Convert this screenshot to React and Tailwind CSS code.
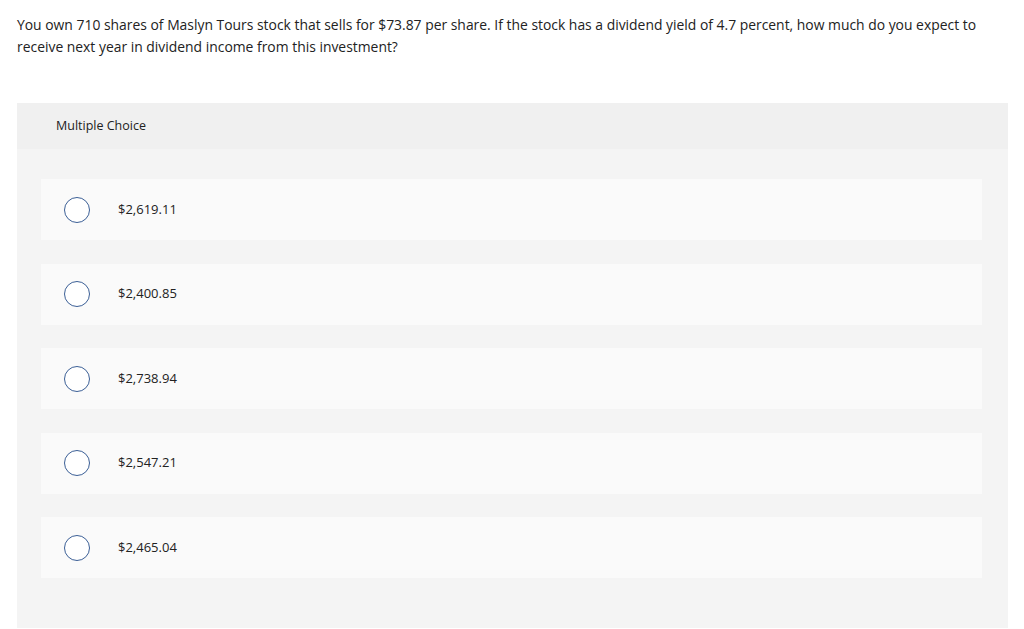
const OPTIONS = ["$2,619.11", "$2,400.85", "$2,738.94", "$2,547.21", "$2,465.04"];

export default function App() {
  return (
    <div className="min-h-[629px] bg-white text-[#222] font-['Open_Sans',_sans-serif]">
      <div className="px-[17px] pt-[14px] text-[13.9px] leading-[22px]">
        You own 710 shares of Maslyn Tours stock that sells for $73.87 per share. If the stock has a dividend yield
        of 4.7 percent, how much do you expect to receive next year in dividend income from this investment?
      </div>

      <div className="mt-[45px] ml-[17px] w-[991px] bg-[#f4f4f4]">
        <div className="h-[46px] flex items-center pl-[39px] bg-[#f0f0f0] text-[12.5px] text-[#222]">
          Multiple Choice
        </div>
        <div className="pt-[30px] pb-[50px] pl-[24px] pr-[26px] flex flex-col gap-[23.5px]">
          {OPTIONS.map((o) => (
            <div key={o} className="h-[61px] bg-[#fafafa] flex items-center">
              <span className="ml-[23px] w-[26px] h-[26px] rounded-full border-[1.5px] border-[#3b5f96] bg-white" />
              <span className="ml-[28px] text-[13px] text-[#222]">{o}</span>
            </div>
          ))}
        </div>
      </div>
    </div>
  );
}
